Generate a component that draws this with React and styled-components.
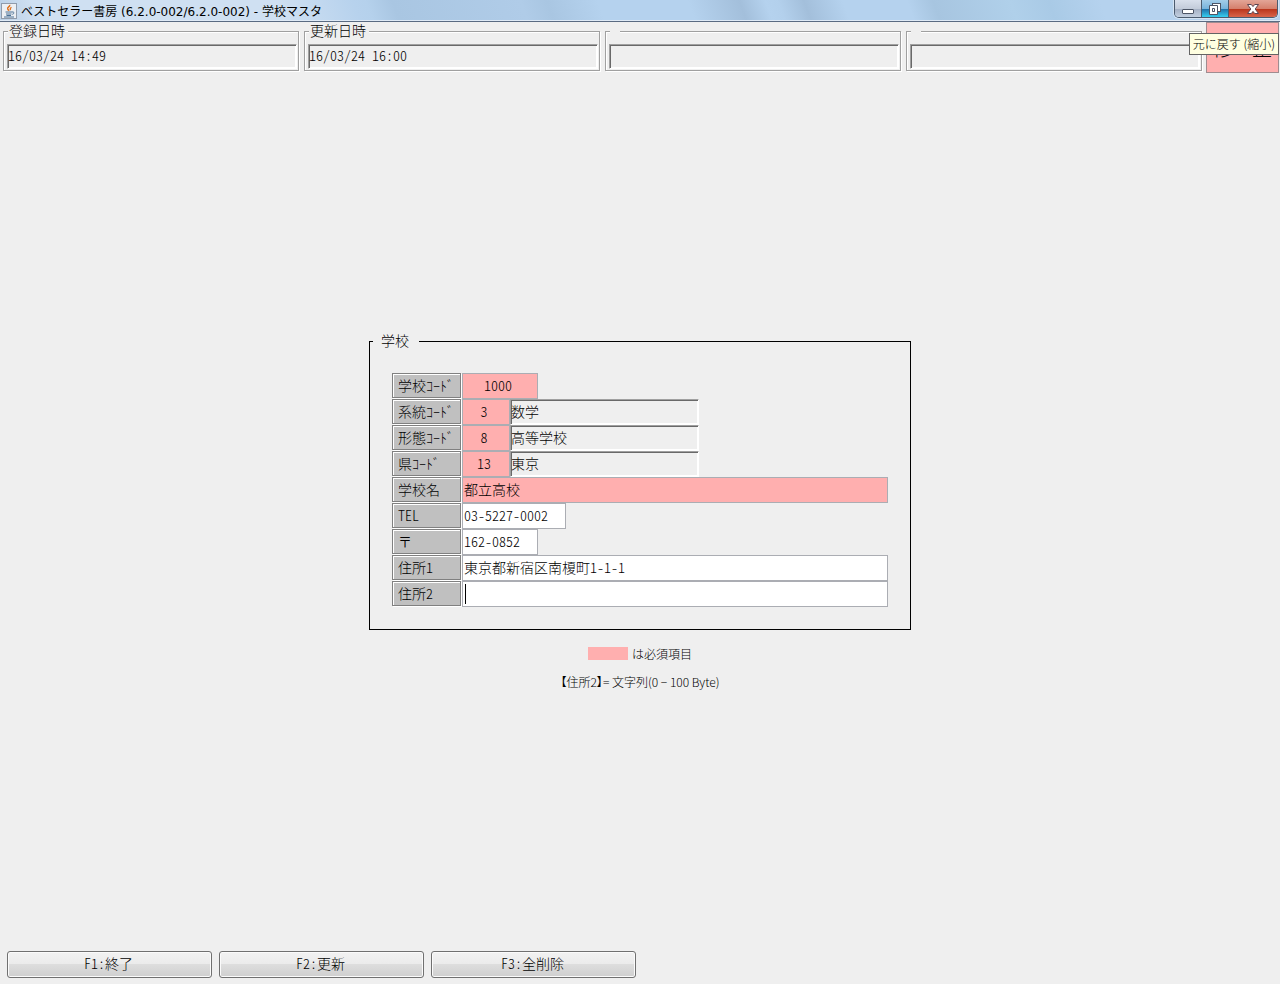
import styled, { createGlobalStyle, css } from "styled-components";

const GlobalStyle = createGlobalStyle`
  * {
    box-sizing: border-box;
  }
  body {
    margin: 0;
    background-color: #efefef;
    color: black;
  }
  body, input, button {
    font-family: "Noto Sans CJK JP", sans-serif;
    font-size: 14px;
    font-weight: 300;
    font-feature-settings: "hwid";
  }
`;

const etched = css`
  border: 1px solid #a0a0a0;
  box-shadow: 1px 1px 0 white, inset 1px 1px 0 white;
`;

const Container = styled.div`
  display: flex;
  flex-direction: column;
  min-height: 100vh;
`;

const TitleBar = styled.header`
  display: flex;
  justify-content: space-between;
  height: 22px;
  padding: 0 2px 0 1px;
  border-bottom: 1px solid #5a6b82;
  box-shadow: inset 0 -1px 0 #dfeaf6;
  background: linear-gradient(
    70deg,
    #b9cfe6 0%,
    #cfe0f2 3%,
    #cfe0f2 22%,
    #b7d2ed 28%,
    #b5d1ec 29%,
    #a9c6e2 31%,
    #b0cce8 41%,
    #a9c6e2 43%,
    #b5d2ee 47%,
    #b5d2ee 54%,
    #a3bfdb 58%,
    #b5d2ee 60%,
    #b3d0ec 61%,
    #a3bfdb 63%,
    #b5d2ee 66%,
    #b5d2ee 71%,
    #a7c5e0 73%,
    #b0d0ea 79%,
    #a9cae6 82%,
    #b5d2ee 86%,
    #b5d2ee 100%
  );
`;

const Title = styled.h1`
  display: flex;
  align-items: center;
  gap: 4px;
  margin: 0;
  font-family: "DejaVu Sans", "Noto Sans CJK JP", sans-serif;
  font-size: 12px;
  font-weight: 400;
  font-feature-settings: normal;
`;

const WindowButtons = styled.div`
  display: flex;
  height: 18px;
  border: 1px solid #4b5b6e;
  border-top: none;
  border-radius: 0 0 5px 5px;
  box-shadow: 0 0 0 1px #d5e4f3;
  overflow: hidden;
`;

const tones = {
  plain: "linear-gradient(#d9e0ec 0%, #c3ccda 50%, #a3afc3 52%, #c3d0e0 100%)",
  hover: "linear-gradient(#a3cde9 0%, #78b4dc 50%, #1f6ea8 52%, #35d0f0 100%)",
  close: "linear-gradient(#e3a597 0%, #d5806d 50%, #b8331a 52%, #d8644a 100%)",
};

const WindowButton = styled.button`
  display: flex;
  align-items: center;
  justify-content: center;
  width: ${(props) => (props.$tone === "close" ? "48px" : "27px")};
  padding: 0;
  border: none;
  border-right: ${(props) => props.$tone !== "close" && "1px solid #4b5b6e"};
  background: ${(props) => tones[props.$tone]};
`;

const StatusBar = styled.div`
  display: flex;
  gap: 5px;
  height: 51px;
  padding: 0 1px 0 3px;
`;

const StatusGroup = styled.fieldset`
  ${etched}
  flex: 1;
  min-width: 0;
  height: 49px;
  margin: 0;
  padding: 4px 1px 0 3px;
`;

const StatusLegend = styled.legend`
  height: 18px;
  margin-left: 1px;
  padding: ${(props) => (props.$empty ? "0 5px" : "0 3px 0 1px")};
  line-height: 16px;
  background-color: #efefef;
`;

const sunken = css`
  border: 1px solid;
  border-color: #a0a0a0 white white #a0a0a0;
  border-radius: 0;
  box-shadow: inset 1px 1px 0 #696969, inset -1px -1px 0 white;
  background-color: #efefef;
`;

const StatusInput = styled.input`
  ${sunken}
  display: block;
  width: 100%;
  height: 25px;
  padding: 0 0 4px;
  outline: none;
`;

const ModeArea = styled.div`
  position: relative;
  width: 73px;
  margin-left: -1px;
`;

const Mode = styled.div`
  display: flex;
  align-items: center;
  justify-content: space-between;
  height: 51px;
  padding: 0 6px;
  border: 1px solid #a08c90;
  background-color: #ffafaf;
  font-size: 20px;
`;

const Tooltip = styled.div`
  position: absolute;
  top: 11px;
  right: 0;
  height: 22px;
  padding: 0 3px;
  border: 1px solid #646464;
  background-color: #ffffe1;
  font-size: 12px;
  line-height: 20px;
  font-feature-settings: normal;
  white-space: nowrap;
`;

const Main = styled.main`
  display: flex;
  flex: 1;
  flex-direction: column;
  align-items: center;
  justify-content: center;
`;

const School = styled.fieldset`
  margin: 0;
  padding: 22px;
  border: 1px solid black;
`;

const SchoolLegend = styled.legend`
  height: 20px;
  margin-left: -19px;
  padding: 0 10px 0 8px;
  line-height: 18px;
`;

const Row = styled.div`
  display: flex;
  height: 26px;
`;

const Label = styled.label`
  ${etched}
  border-color: #808080;
  width: 69px;
  height: 25px;
  margin-right: 1px;
  padding-left: 5px;
  line-height: 22px;
  background-color: #c0c0c0;
`;

const widths = { code: "48px", short: "76px", medium: "104px", long: "426px" };

const Input = styled.input`
  width: ${(props) => widths[props.$size]};
  height: 26px;
  padding: ${(props) => (props.$center ? "0 4px 2px 0" : "0 1px 2px")};
  border: 1px solid #abadb3;
  border-radius: 0;
  outline: none;
  text-align: ${(props) => props.$center && "center"};
  background: ${(props) => (props.$required ? "#ffafaf" : "white")};
  ${(props) =>
    props.$caret &&
    "background: linear-gradient(black, black) 2px 2px / 1px 20px no-repeat white;"}
`;

const NameInput = styled.input`
  ${sunken}
  width: 189px;
  height: 26px;
  padding: 0 0 2px;
  outline: none;
`;

const Note = styled.div`
  display: flex;
  align-items: center;
  gap: 4px;
  height: 18px;
  margin-top: 14px;
  font-size: 12px;
`;

const Swatch = styled.span`
  width: 40px;
  height: 13px;
  background-color: #ffafaf;
`;

const Message = styled.p`
  height: 18px;
  margin: 11px 0 0;
  font-size: 12px;
  line-height: 18px;
  font-feature-settings: "palt";
`;

const Footer = styled.footer`
  display: flex;
  gap: 7px;
  padding: 2px 7px 6px;
`;

const Button = styled.button`
  width: 205px;
  height: 27px;
  padding: 0 2px 4px 0;
  border: 1px solid #707070;
  border-radius: 3px;
  box-shadow: inset 0 0 0 1px #fbfbfb;
  background: linear-gradient(#f2f2f2 0%, #ebebeb 48%, #dddddd 50%, #cfcfcf 100%);
`;

const statuses = [
  { label: "登録日時", value: "16/03/24 14:49" },
  { label: "更新日時", value: "16/03/24 16:00" },
  { label: "", value: "" },
  { label: "", value: "" },
];

const fields = [
  { id: "school", label: "学校ｺｰﾄﾞ", value: "1000", size: "short", required: true, center: true },
  { id: "kind", label: "系統ｺｰﾄﾞ", value: "3", size: "code", required: true, center: true, name: "数学" },
  { id: "form", label: "形態ｺｰﾄﾞ", value: "8", size: "code", required: true, center: true, name: "高等学校" },
  { id: "pref", label: "県ｺｰﾄﾞ", value: "13", size: "code", required: true, center: true, name: "東京" },
  { id: "name", label: "学校名", value: "都立高校", size: "long", required: true },
  { id: "tel", label: "TEL", value: "03-5227-0002", size: "medium" },
  { id: "zip", label: "〒", value: "162-0852", size: "short" },
  { id: "address1", label: "住所1", value: "東京都新宿区南榎町1-1-1", size: "long" },
  { id: "address2", label: "住所2", value: "", size: "long", caret: true },
];

const JavaIcon = () => (
  <svg width="16" height="16" viewBox="0 0 16 16" fill="none">
    <rect x="0.5" y="0.5" width="15" height="15" fill="#eceff3" stroke="#8f9bab" />
    <path d="M8.600 1.800c1 1.700-2.800 2.500-1.900 4.200.4.700 1 1 .9 1.900" stroke="#e0701a" strokeWidth="1.500" />
    <path d="M10.500 4.200c-1.700.9-1.600 1.700-1.100 3" stroke="#e0701a" strokeWidth="1.200" />
    <path d="M4.500 9h6.500M5 11h5.500M5.500 12.500h4.500M3 14h10M11 9c2.500-.7 2.500 2 .3 2.300" stroke="#4a7196" />
  </svg>
);

const App = () => {
  return (
    <Container>
      <GlobalStyle />
      <TitleBar>
        <Title>
          <JavaIcon />
          ベストセラー書房 (6.2.0-002/6.2.0-002) - 学校マスタ
        </Title>
        <WindowButtons>
          <WindowButton $tone="plain" aria-label="最小化">
            <svg width="14" height="14" viewBox="0 0 14 14">
              <rect x="1.500" y="7.500" width="11" height="4" rx="0.500" fill="white" stroke="#4c5566" />
            </svg>
          </WindowButton>
          <WindowButton $tone="hover" aria-label="元に戻す">
            <svg width="14" height="14" viewBox="0 0 14 14" fill="white" stroke="#4c5566">
              <rect x="4.500" y="1.500" width="8" height="8" />
              <path d="M1.500 3.500h8v9h-8zM4.500 6.500v3h2v-3z" fillRule="evenodd" />
            </svg>
          </WindowButton>
          <WindowButton $tone="close" aria-label="閉じる">
            <svg width="14" height="14" viewBox="0 0 14 14">
              <path
                d="M1.500 2.500h3.800L7 4.600l1.700-2.100h3.800L9.200 7l3.300 4.500H8.700L7 9.400l-1.700 2.100H1.500L4.800 7z"
                fill="white"
                stroke="#5c4450"
              />
            </svg>
          </WindowButton>
        </WindowButtons>
      </TitleBar>
      <StatusBar>
        {statuses.map((status, i) => (
          <StatusGroup key={i}>
            <StatusLegend $empty={!status.label}>{status.label}</StatusLegend>
            <StatusInput aria-label={status.label || "予備"} defaultValue={status.value} readOnly />
          </StatusGroup>
        ))}
        <ModeArea>
          <Mode>
            <span>修</span>
            <span>正</span>
          </Mode>
          <Tooltip role="tooltip">元に戻す (縮小)</Tooltip>
        </ModeArea>
      </StatusBar>
      <Main>
        <School>
          <SchoolLegend>学校</SchoolLegend>
          {fields.map((field) => (
            <Row key={field.id}>
              <Label htmlFor={field.id}>{field.label}</Label>
              <Input
                id={field.id}
                defaultValue={field.value}
                $size={field.size}
                $required={field.required}
                $center={field.center}
                $caret={field.caret}
              />
              {field.name && <NameInput aria-label={field.label} defaultValue={field.name} readOnly />}
            </Row>
          ))}
        </School>
        <Note>
          <Swatch />
          は必須項目
        </Note>
        <Message>【住所2】= 文字列(0 − 100 Byte)</Message>
      </Main>
      <Footer>
        <Button>F1:終了</Button>
        <Button>F2:更新</Button>
        <Button>F3:全削除</Button>
      </Footer>
    </Container>
  );
};

export default App;
